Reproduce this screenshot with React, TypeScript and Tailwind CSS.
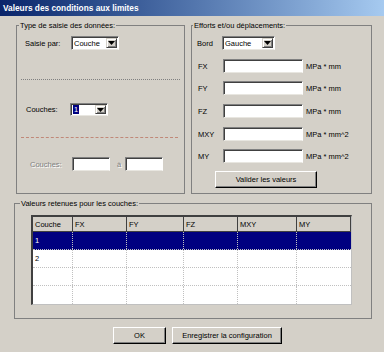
import React from "react";

function Arrow() {
  return (
    <svg width="7" height="4" viewBox="0 0 7 4">
      <path d="M0 0h7L3.5 4z" fill="#000" />
    </svg>
  );
}

const sunken =
  "bg-white border border-t-[#808080] border-l-[#808080] border-r-white border-b-[#e8e6e0] shadow-[inset_1px_1px_0_#404040]";

function Select({ cls, value, selected }: { cls: string; value: string; selected?: boolean }) {
  return (
    <div className={`flex ${cls} ${sunken}`}>
      <div className="flex-1 flex items-center pl-[2px] overflow-hidden text-black">
        {selected ? <span className="bg-[#000080] text-white px-[1px]">{value}</span> : <span>{value}</span>}
      </div>
      <div className="w-[11px] my-[1px] mr-[1px] bg-[#d4d0c8] border border-t-[#d4d0c8] border-l-[#d4d0c8] border-r-[#404040] border-b-[#404040] shadow-[inset_1px_1px_0_#fff,inset_-1px_-1px_0_#808080] flex items-center justify-center">
        <Arrow />
      </div>
    </div>
  );
}

function Field({ cls }: { cls: string }) {
  return <div className={`${cls} ${sunken}`} />;
}

function Btn({ cls, label }: { cls: string; label: string }) {
  return (
    <div
      className={`${cls} bg-[#d4d0c8] border border-t-white border-l-white border-r-black border-b-black shadow-[inset_-1px_-1px_0_#808080] flex items-center justify-center`}
    >
      {label}
    </div>
  );
}

function ForceRow({ label, unit, mt }: { label: string; unit: string; mt: string }) {
  return (
    <div className={`flex items-center h-[14px] pl-[6px] ${mt}`}>
      <div className="w-[25px]">{label}</div>
      <Field cls="w-[80px] h-[14px]" />
      <div className="ml-[3px]">{unit}</div>
    </div>
  );
}

const cols = ["Couche", "FX", "FY", "FZ", "MXY", "MY"];
const grid = "grid grid-cols-[40px_54px_57px_54px_59px_54px]";

export default function App() {
  return (
    <div className="w-[384px] h-[352px] bg-[#d4d0c8] flex flex-col [font-family:'Liberation_Sans',Arial,sans-serif] text-[7.5px] leading-[9px] text-black overflow-hidden">
      <div className="h-[16px] shrink-0 bg-linear-to-r from-[#0a246a] to-[#a6caf0] flex items-center pl-[3px] text-white font-bold text-[8.3px]">
        Valeurs des conditions aux limites
      </div>

      <div className="flex mt-[5px] pl-[16px] gap-[6px]">
        <fieldset className="w-[169px] h-[173px] border border-[#808080]">
          <legend className="ml-[2px] px-[1px]">Type de saisie des données:</legend>
          <div className="flex flex-col">
            <div className="flex items-center h-[14px] mt-[6px] pl-[8px]">
              <div className="w-[46px]">Saisie par:</div>
              <Select cls="w-[48px] h-[14px]" value="Couche" />
            </div>
            <div className="mt-[29px] ml-[4px] w-[159px] border-t border-dotted border-[#808080]" />
            <div className="flex items-center h-[13px] mt-[23px] pl-[9px]">
              <div className="w-[44px]">Couches:</div>
              <Select cls="w-[38px] h-[13px]" value="1" selected />
            </div>
            <div className="mt-[21px] ml-[4px] w-[157px] border-t border-dashed border-[#c08878]" />
            <div className="flex items-center h-[14px] mt-[19px] pl-[13px]">
              <div className="w-[42px] text-[#808080] [text-shadow:1px_1px_0_#fff]">Couches:</div>
              <Field cls="w-[38px] h-[14px]" />
              <div className="ml-[7px] w-[8px] text-[#808080] [text-shadow:1px_1px_0_#fff]">à</div>
              <Field cls="w-[38px] h-[14px]" />
            </div>
          </div>
        </fieldset>

        <fieldset className="w-[181px] h-[173px] border border-[#808080]">
          <legend className="ml-[1px] px-[1px]">Efforts et/ou déplacements:</legend>
          <div className="flex flex-col">
            <div className="flex items-center h-[14px] mt-[6px] pl-[5px]">
              <div className="w-[25px]">Bord</div>
              <Select cls="w-[53px] h-[14px]" value="Gauche" />
            </div>
            <ForceRow label="FX" unit="MPa * mm" mt="mt-[9px]" />
            <ForceRow label="FY" unit="MPa * mm" mt="mt-[8px]" />
            <ForceRow label="FZ" unit="MPa * mm" mt="mt-[9px]" />
            <ForceRow label="MXY" unit="MPa * mm^2" mt="mt-[9px]" />
            <ForceRow label="MY" unit="MPa * mm^2" mt="mt-[8px]" />
            <Btn cls="mt-[8px] ml-[23px] w-[102px] h-[17px]" label="Valider les valeurs" />
          </div>
        </fieldset>
      </div>

      <fieldset className="mt-[5px] ml-[14px] w-[358px] h-[120px] border border-[#808080]">
        <legend className="ml-[5px] px-[1px]">Valeurs retenues pour les couches:</legend>
        <div className="mt-[7px] ml-[16px] w-[321px] border-t-2 border-l-2 border-r border-b border-t-[#404040] border-l-[#404040] border-r-[#c0c0c0] border-b-[#c0c0c0] bg-white">
          <div className={`${grid} h-[15px] border-b border-[#404040] bg-[#d4d0c8]`}>
            {cols.map((c) => (
              <div key={c} className="border-r border-[#404040] pl-[2px] flex items-center">
                {c}
              </div>
            ))}
          </div>
          {["1", "2", "", ""].map((v, i) => (
            <div
              key={i}
              className={`${grid} h-[18px] ${i < 3 ? "border-b border-dotted border-[#c0c0c0]" : ""} ${
                i === 0 ? "bg-[#000080] text-white" : "bg-white"
              }`}
            >
              {cols.map((c, j) => (
                <div
                  key={c}
                  className={`pl-[2px] flex items-center ${j < 5 ? "border-r border-dotted border-[#c0c0c0]" : ""}`}
                >
                  {j === 0 ? v : ""}
                </div>
              ))}
            </div>
          ))}
        </div>
      </fieldset>

      <div className="flex mt-[8px] pl-[113px] gap-[6px]">
        <Btn cls="w-[53px] h-[17px]" label="OK" />
        <Btn cls="w-[110px] h-[17px]" label="Enregistrer la configuration" />
      </div>
    </div>
  );
}
